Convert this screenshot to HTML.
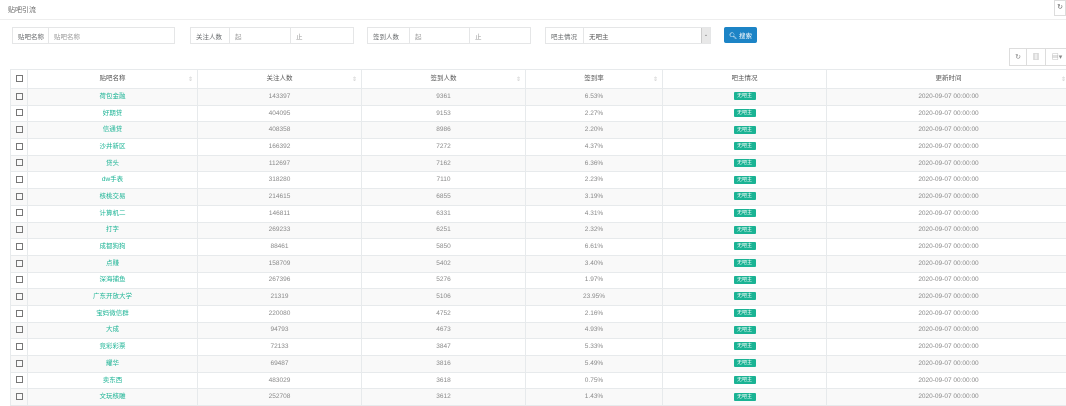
<!DOCTYPE html><html><head><meta charset="utf-8"><style>
*{box-sizing:border-box;margin:0;padding:0}
body{width:1066px;height:400px;overflow:hidden;background:#fff;font-family:"Liberation Sans","Noto Sans CJK SC",sans-serif;font-size:7px;color:#676a6c;position:relative}
.a{position:absolute}
.title{left:8px;top:5px;font-size:7px;color:#666}
.hl{left:0;top:19px;width:1066px;height:1px;background:#eee}
.box{border:1px solid #e5e6e7;height:17px;top:27px;display:flex;align-items:center;padding-left:5px;color:#999;font-size:6.5px}
.lab{color:#676a6c;background:#fff}
.btn{left:724px;top:27px;width:33px;height:16px;background:#1c84c6;color:#fff;border-radius:2px;display:flex;align-items:center;justify-content:center;font-size:6.5px}
.tb{top:48px;height:18px;border:1px solid #ddd;display:flex;align-items:center;justify-content:center;color:#888;font-size:7px}
table{position:absolute;left:10px;top:69px;border-collapse:collapse;width:1060px;table-layout:fixed}
td,th{border:1px solid #e7eaec;text-align:center;font-weight:normal;height:16.7px;line-height:14px;padding:0;font-size:6.5px;color:#888;white-space:nowrap;overflow:hidden;vertical-align:middle}
th{height:19px;color:#555;position:relative}
th span.s{position:absolute;right:4px;top:3px;color:#ccc;font-size:6px}
tr:nth-child(even) td{background:#f9f9f9}
td.n{color:#1ab394}
.cb{display:inline-block;width:7px;height:7px;border:1px solid #777;vertical-align:middle}
.bd{display:inline-block;background:#1ab394;color:#fff;font-size:5px;width:22px;height:8px;line-height:8px;border-radius:1px;vertical-align:middle}
</style></head><body>
<div class="a title">贴吧引流</div>
<div class="a" style="left:1054px;top:0;width:12px;height:16px;border:1px solid #ddd;font-size:7px;text-align:center;line-height:14px;color:#666">↻</div>
<div class="a hl"></div>
<div class="a box lab" style="left:12px;width:37px">贴吧名称</div>
<div class="a box" style="left:48px;width:127px">贴吧名称</div>
<div class="a box lab" style="left:190px;width:40px">关注人数</div>
<div class="a box" style="left:229px;width:62px">起</div>
<div class="a box" style="left:290px;width:64px">止</div>
<div class="a box lab" style="left:367px;width:43px">签到人数</div>
<div class="a box" style="left:409px;width:61px">起</div>
<div class="a box" style="left:469px;width:62px">止</div>
<div class="a box lab" style="left:545px;width:39px">吧主情况</div>
<div class="a box" style="left:583px;width:128px;color:#555">无吧主</div>
<div class="a" style="left:701px;top:28px;width:9px;height:15px;background:#e8e8e8;border-left:1px solid #ccc;font-size:5px;text-align:center;line-height:15px;color:#666">⌄</div>
<div class="a btn">🔍︎ 搜索</div>
<div class="a tb" style="left:1009px;width:18px">↻</div>
<div class="a tb" style="left:1026px;width:20px">▥</div>
<div class="a tb" style="left:1045px;width:24px">▤▾</div>
<table>
<colgroup><col style="width:17px"><col style="width:170px"><col style="width:164px"><col style="width:164px"><col style="width:137px"><col style="width:164px"><col style="width:244px"></colgroup>
<tr><th><span class="cb"></span></th><th>贴吧名称<span class="s">⇕</span></th><th>关注人数<span class="s">⇕</span></th><th>签到人数<span class="s">⇕</span></th><th>签到率<span class="s">⇕</span></th><th>吧主情况</th><th>更新时间<span class="s">⇕</span></th></tr>
<tr><td><span class="cb"></span></td><td class="n">荷包金融</td><td>143397</td><td>9361</td><td>6.53%</td><td><span class="bd">无吧主</span></td><td>2020-09-07 00:00:00</td></tr>
<tr><td><span class="cb"></span></td><td class="n">好期贷</td><td>404095</td><td>9153</td><td>2.27%</td><td><span class="bd">无吧主</span></td><td>2020-09-07 00:00:00</td></tr>
<tr><td><span class="cb"></span></td><td class="n">信通贷</td><td>408358</td><td>8986</td><td>2.20%</td><td><span class="bd">无吧主</span></td><td>2020-09-07 00:00:00</td></tr>
<tr><td><span class="cb"></span></td><td class="n">沙井新区</td><td>166392</td><td>7272</td><td>4.37%</td><td><span class="bd">无吧主</span></td><td>2020-09-07 00:00:00</td></tr>
<tr><td><span class="cb"></span></td><td class="n">贷头</td><td>112697</td><td>7162</td><td>6.36%</td><td><span class="bd">无吧主</span></td><td>2020-09-07 00:00:00</td></tr>
<tr><td><span class="cb"></span></td><td class="n">dw手表</td><td>318280</td><td>7110</td><td>2.23%</td><td><span class="bd">无吧主</span></td><td>2020-09-07 00:00:00</td></tr>
<tr><td><span class="cb"></span></td><td class="n">核桃交易</td><td>214615</td><td>6855</td><td>3.19%</td><td><span class="bd">无吧主</span></td><td>2020-09-07 00:00:00</td></tr>
<tr><td><span class="cb"></span></td><td class="n">计算机二</td><td>146811</td><td>6331</td><td>4.31%</td><td><span class="bd">无吧主</span></td><td>2020-09-07 00:00:00</td></tr>
<tr><td><span class="cb"></span></td><td class="n">打字</td><td>269233</td><td>6251</td><td>2.32%</td><td><span class="bd">无吧主</span></td><td>2020-09-07 00:00:00</td></tr>
<tr><td><span class="cb"></span></td><td class="n">成都狗狗</td><td>88461</td><td>5850</td><td>6.61%</td><td><span class="bd">无吧主</span></td><td>2020-09-07 00:00:00</td></tr>
<tr><td><span class="cb"></span></td><td class="n">点赚</td><td>158709</td><td>5402</td><td>3.40%</td><td><span class="bd">无吧主</span></td><td>2020-09-07 00:00:00</td></tr>
<tr><td><span class="cb"></span></td><td class="n">深海捕鱼</td><td>267396</td><td>5276</td><td>1.97%</td><td><span class="bd">无吧主</span></td><td>2020-09-07 00:00:00</td></tr>
<tr><td><span class="cb"></span></td><td class="n">广东开放大学</td><td>21319</td><td>5106</td><td>23.95%</td><td><span class="bd">无吧主</span></td><td>2020-09-07 00:00:00</td></tr>
<tr><td><span class="cb"></span></td><td class="n">宝妈微信群</td><td>220080</td><td>4752</td><td>2.16%</td><td><span class="bd">无吧主</span></td><td>2020-09-07 00:00:00</td></tr>
<tr><td><span class="cb"></span></td><td class="n">大成</td><td>94793</td><td>4673</td><td>4.93%</td><td><span class="bd">无吧主</span></td><td>2020-09-07 00:00:00</td></tr>
<tr><td><span class="cb"></span></td><td class="n">竞彩彩票</td><td>72133</td><td>3847</td><td>5.33%</td><td><span class="bd">无吧主</span></td><td>2020-09-07 00:00:00</td></tr>
<tr><td><span class="cb"></span></td><td class="n">耀华</td><td>69487</td><td>3816</td><td>5.49%</td><td><span class="bd">无吧主</span></td><td>2020-09-07 00:00:00</td></tr>
<tr><td><span class="cb"></span></td><td class="n">卖东西</td><td>483029</td><td>3618</td><td>0.75%</td><td><span class="bd">无吧主</span></td><td>2020-09-07 00:00:00</td></tr>
<tr><td><span class="cb"></span></td><td class="n">文玩核雕</td><td>252708</td><td>3612</td><td>1.43%</td><td><span class="bd">无吧主</span></td><td>2020-09-07 00:00:00</td></tr>
</table>
</body></html>
